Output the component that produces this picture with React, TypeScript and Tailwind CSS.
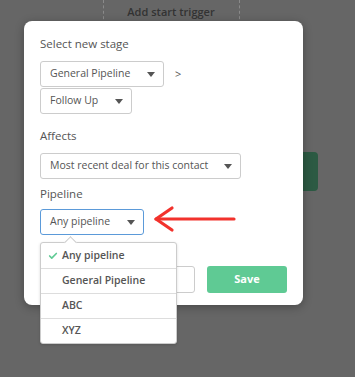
import { Check } from 'lucide-react';

const Caret = () => (
  <svg width="8" height="5" viewBox="0 0 8 5" className="shrink-0">
    <path d="M0 0h8L4 5z" fill="#555" />
  </svg>
);

const Select = ({ label, className, focused }: { label: string; className: string; focused?: boolean }) => (
  <div
    className={`flex h-[26px] items-center justify-between rounded-[3px] border bg-white pl-[9px] pr-[8px] text-[10.5px] text-[#555] ${
      focused ? 'border-[#5b9ad9]' : 'border-[#ccc]'
    } ${className}`}
  >
    <span className="whitespace-nowrap">{label}</span>
    <Caret />
  </div>
);

const options = ['Any pipeline', 'General Pipeline', 'ABC', 'XYZ'];

export default function App() {
  return (
    <div className="relative h-[377px] w-[355px] overflow-hidden bg-[#666] font-['Open_Sans',sans-serif]">
      {/* canvas behind the modal */}
      <div className="absolute left-[103px] top-0 h-[30px] border-l border-dashed border-[#8a8a8a]" />
      <div className="absolute left-[239px] top-0 h-[30px] border-l border-dashed border-[#8a8a8a]" />
      <div className="absolute left-[103px] top-[4px] w-[136px] text-center text-[11px] font-semibold text-[#333]">
        Add start trigger
      </div>
      <div className="absolute left-[280px] top-[152px] h-[39px] w-[38px] rounded-[4px] bg-[#2c5a43]" />

      {/* modal */}
      <div className="absolute left-[24px] top-[21px] flex h-[284px] w-[279px] flex-col rounded-[8px] bg-white px-[16px] pt-[14px] text-[#555] shadow-[0_2px_10px_rgba(0,0,0,0.3)]">
        <div className="text-[11.5px] leading-[18px]">Select new stage</div>
        <div className="mt-[8px] flex items-center gap-[11px]">
          <Select label="General Pipeline" className="w-[124px]" />
          <span className="text-[11px]">&gt;</span>
        </div>
        <Select label="Follow Up" className="mt-px w-[92px]" />

        <div className="mt-[13px] text-[11.5px] leading-[18px]">Affects</div>
        <Select label="Most recent deal for this contact" className="mt-[8px] w-[201px]" />

        <div className="mt-[6px] text-[11.5px] leading-[18px]">Pipeline</div>
        <div className="mt-[6px] flex items-center">
          <Select label="Any pipeline" className="w-[104px]" focused />
        </div>

        <div className="mt-[31px] flex justify-end gap-[12px]">
          <div className="h-[27px] w-[80px] rounded-[3px] border border-[#ccc] bg-white" />
          <div className="flex h-[27px] w-[80px] items-center justify-center rounded-[3px] bg-[#5fca94] text-[11px] font-bold text-white">
            Save
          </div>
        </div>
      </div>

      {/* red arrow */}
      <svg className="absolute left-[150px] top-[204px]" width="90" height="30" viewBox="0 0 90 30">
        <g stroke="#f2322c" strokeWidth="3.2" strokeLinecap="round" strokeLinejoin="round" fill="none">
          <path d="M6 15H84" />
          <path d="M22 4L6 15l16 11" />
        </g>
      </svg>

      {/* dropdown */}
      <div className="absolute left-[40px] top-[242px] w-[137px] rounded-[3px] border border-[#ccc] bg-white shadow-[0_1px_3px_rgba(0,0,0,0.15)]">
        <div className="absolute -top-[5px] left-[25px] h-[9px] w-[9px] rotate-45 border-l border-t border-[#ccc] bg-white" />
        {options.map((o, i) => (
          <div
            key={o}
            className={`relative flex h-[25px] items-center pl-[21px] text-[10.5px] font-semibold text-[#555] ${
              i > 0 ? 'border-t border-[#ddd]' : ''
            }`}
          >
            {i === 0 && <Check size={10} strokeWidth={4} className="absolute left-[7px] text-[#5fca94]" />}
            {o}
          </div>
        ))}
      </div>
    </div>
  );
}
